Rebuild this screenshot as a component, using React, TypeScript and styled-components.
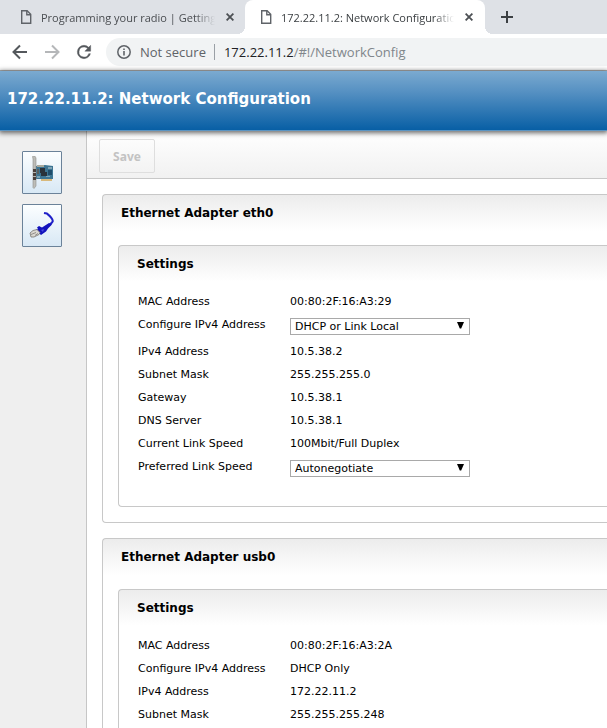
import React from "react";
import styled, { createGlobalStyle } from "styled-components";

const Global = createGlobalStyle`
  * { box-sizing: border-box; }
  html, body { margin: 0; height: 100%; background: #fff; }
  #root { height: 100%; }
  button, select { font: inherit; color: inherit; }
`;

const Window = styled.div`
  min-height: 100vh;
  display: flex;
  flex-direction: column;
  font-family: "DejaVu Sans", Verdana, sans-serif;
  font-size: 11px;
  color: #000;
`;

const TabStrip = styled.div`
  display: flex;
  flex: none;
  height: 34px;
  background: #dee1e6;
  font-family: "Open Sans", "Segoe UI", sans-serif;
  font-size: 11px;
`;

const Tab = styled.div<{ $active?: boolean }>`
  position: relative;
  flex: 0 1 ${(p) => (p.$active ? "240px" : "245px")};
  min-width: 0;
  display: flex;
  align-items: center;
  gap: 9px;
  padding: ${(p) => (p.$active ? "0 10px 0 15px" : "0 9px 0 20px")};
  color: ${(p) => (p.$active ? "#3c4043" : "#4a4d51")};
  background: ${(p) => (p.$active ? "#fff" : "transparent")};
  border-radius: 8px 8px 0 0;
  &::before, &::after {
    content: "";
    display: ${(p) => (p.$active ? "block" : "none")};
    position: absolute;
    bottom: 0;
    width: 8px;
    height: 8px;
  }
  &::before { left: -8px; background: radial-gradient(circle at 0 0, transparent 8px, #fff 8px); }
  &::after { right: -8px; background: radial-gradient(circle at 100% 0, transparent 8px, #fff 8px); }
`;

const TabTitle = styled.span`
  flex: 1;
  min-width: 0;
  overflow: hidden;
  white-space: nowrap;
  mask-image: linear-gradient(to right, #000 calc(100% - 20px), transparent);
`;

const IconButton = styled.button<{ $size?: number }>`
  flex: none;
  display: flex;
  align-items: center;
  justify-content: center;
  width: ${(p) => p.$size ?? 16}px;
  height: ${(p) => p.$size ?? 16}px;
  padding: 0;
  border: 0;
  background: transparent;
`;

const NewTab = styled(IconButton)`
  margin: 3px 0 0 8px;
`;

const AddressRow = styled.div`
  flex: none;
  display: flex;
  align-items: center;
  height: 37px;
  padding-left: 4px;
  background: #fff;
  border-bottom: 1px solid #b6b6b6;
`;

const Omnibox = styled.div`
  flex: 1;
  display: flex;
  align-items: center;
  height: 28px;
  margin-left: 6px;
  padding-left: 11px;
  background: #f1f3f4;
  border-radius: 14px 0 0 14px;
  font-family: "Open Sans", "Segoe UI", sans-serif;
  font-size: 13px;
  white-space: nowrap;
  color: #5f6368;
`;

const Security = styled.span`
  margin-left: 9px;
  padding-right: 8px;
  border-right: 1px solid #9aa0a6;
  line-height: 16px;
`;

const Url = styled.span`
  margin-left: 9px;
  color: #80868b;
  b { font-weight: 400; color: #202124; }
`;

const Banner = styled.header`
  position: relative;
  z-index: 1;
  flex: none;
  display: flex;
  align-items: center;
  height: 60px;
  padding: 0 7px 4px;
  background: linear-gradient(#7baad0, #5590c2 36%, #085fa5);
  border-bottom: 1px solid #5a94c2;
  box-shadow: 0 1px 5px 1px rgba(0, 0, 0, 0.6);
`;

const BannerTitle = styled.h1`
  margin: 0;
  font-size: 15px;
  line-height: 20px;
  color: #fff;
  white-space: nowrap;
`;

const Body = styled.div`
  flex: 1;
  display: flex;
`;

const Sidebar = styled.nav`
  flex: none;
  width: 87px;
  padding: 20px 22px;
  display: flex;
  flex-direction: column;
  gap: 10px;
  background: #efefef;
  border-right: 1px solid #c6c6c6;
`;

const SideButton = styled.button`
  display: flex;
  align-items: center;
  justify-content: center;
  width: 40px;
  height: 43px;
  padding: 0;
  border: 1px solid #6b8299;
  border-radius: 1px;
  background: linear-gradient(#fcfeff, #d8e8f5);
`;

const Main = styled.main`
  flex: 1;
  min-width: 0;
`;

const Toolbar = styled.div`
  height: 48px;
  padding: 8px 12px;
  background: linear-gradient(#fff, #f1f1f1);
  border-bottom: 1px solid #c8c8c8;
`;

const SaveButton = styled.button`
  width: 56px;
  height: 34px;
  padding: 0;
  border: 1px solid #dedede;
  border-radius: 2px;
  background: transparent;
  font-family: "Noto Sans", Tahoma, sans-serif;
  font-size: 12px;
  font-weight: 700;
  color: #c3c3c3;
`;

const Content = styled.div`
  display: flex;
  flex-direction: column;
  gap: 15px;
  padding: 15px 0 15px 15px;
`;

const Panel = styled.section`
  padding: 0 0 15px 15px;
  border: 1px solid #c8c8c8;
  border-right: 0;
  border-radius: 4px 0 0 4px;
  background: linear-gradient(#ececec, #fff 36px);
`;

const SettingsPanel = styled(Panel)`
  padding: 0 0 24px 15px;
`;

const PanelTitle = styled.h2`
  margin: 0;
  padding: 10px 3px 24px;
  font-size: 12px;
  line-height: 16px;
`;

const SettingsTitle = styled(PanelTitle)`
  padding-bottom: 18px;
`;

const Settings = styled.dl`
  margin: 0;
  padding-left: 4px;
`;

const Row = styled.div`
  display: grid;
  grid-template-columns: 152px 1fr;
  padding: 5px 0;
  line-height: 13px;
  dd { margin: 0; }
`;

const SelectBox = styled.select`
  display: block;
  width: 100%;
  height: 17px;
  padding: 0 4px;
  border: 1px solid #a9a9a9;
  border-radius: 0;
  appearance: none;
  background: #fff;
`;

const SelectWrap = styled.div`
  position: relative;
  width: 180px;
  svg { position: absolute; right: 6px; top: 4px; pointer-events: none; }
`;

const DocIcon = () => (
  <svg width="12" height="16" viewBox="0 0 12 16" fill="none" stroke="#5f6368" strokeWidth="1.4">
    <path d="M1.7 1.7h5.4l3.6 3.6v9H1.7z" />
    <path d="M6.8 1.7v4h4" />
  </svg>
);

const CloseIcon = () => (
  <svg width="8" height="8" viewBox="0 0 8 8" stroke="#4c5054" strokeWidth="1.8">
    <path d="M.6.6l6.8 6.8M7.4.6L.6 7.4" />
  </svg>
);

const ArrowIcon = ({ forward = false }: { forward?: boolean }) => (
  <svg width="24" height="24" viewBox="0 0 24 24" fill="none" stroke={forward ? "#b5b7b9" : "#54585c"} strokeWidth="2">
    <path d={forward ? "M5 12h13M12 5.5l6.5 6.5-6.5 6.5" : "M19 12H6M12 5.5L5.5 12l6.5 6.5"} />
  </svg>
);

const ReloadIcon = () => (
  <svg width="20" height="20" viewBox="0 0 24 24" fill="#54585c" stroke="#54585c" strokeWidth=".5">
    <path d="M17.65 6.35A7.96 7.96 0 0 0 12 4a8 8 0 1 0 7.73 10h-2.08A6 6 0 1 1 12 6c1.66 0 3.14.69 4.22 1.78L13 11h7V4z" />
  </svg>
);

const InfoIcon = () => (
  <svg width="14" height="14" viewBox="0 0 14 14">
    <circle cx="7" cy="7" r="6.2" fill="none" stroke="#5f6368" strokeWidth="1.5" />
    <path d="M6.2 6h1.6v4.4H6.2zM6.2 3.4h1.6V5H6.2z" fill="#5f6368" />
  </svg>
);

const CardIcon = () => (
  <svg width="24" height="34" viewBox="0 0 24 34">
    <path d="M6 10l9-1 8 1v13H6z" fill="#3d7593" />
    <path d="M11 23h11v2H11z" fill="#d8b97c" />
    <path d="M7 9h7v2H7z" fill="#a9a99c" />
    <path d="M18 11h4v2h-4zM7 20h3v2H7zM16 20h4v1h-4z" fill="#7fa4b5" />
    <path d="M10 12h5v4h2v4h-6v-3h-1z" fill="#29323a" />
    <path d="M18 14h4v5h-4z" fill="#1f4d6b" />
    <path d="M7 13h2v5H7z" fill="#5a5f60" />
    <path d="M2.500.5L5 .2 6 2v28l-2 2.500-1-1V3z" fill="#bdbdb8" stroke="#8f8f8b" strokeWidth=".6" />
    <path d="M3 13h3v3H3zM3 17h3v3H3zM3 21h3v3H3z" fill="#4b403c" />
  </svg>
);

const CableIcon = () => (
  <svg width="26" height="28" viewBox="0 0 26 28">
    <path d="M15 1l3 .6C21 4 23.500 6.500 23.800 9c-.3 2-3 3.500-6.300 6" fill="none" stroke="#2020c8" strokeWidth="2" strokeLinejoin="round" />
    <path d="M20 11l-7 4.500-3-1.500-2 1.500 1 1.500-2 1 5 5 5-3.500 2-3 4-4z" fill="#1212bd" />
    <path d="M12 18l3-1-1 3z" fill="#4a4ae0" />
    <path d="M1 21l3-2.500 4-1 3 3-1 2-5 2.500H2z" fill="#dad7d0" stroke="#77746f" strokeWidth=".8" />
    <path d="M2 22.500l5-2M6 23.500l3-2" stroke="#8a8680" strokeWidth=".9" />
  </svg>
);

type Setting = { label: string; value: string; options?: string[] };

const ETH0: Setting[] = [
  { label: "MAC Address", value: "00:80:2F:16:A3:29" },
  { label: "Configure IPv4 Address", value: "DHCP or Link Local", options: ["DHCP or Link Local", "Static", "DHCP Only"] },
  { label: "IPv4 Address", value: "10.5.38.2" },
  { label: "Subnet Mask", value: "255.255.255.0" },
  { label: "Gateway", value: "10.5.38.1" },
  { label: "DNS Server", value: "10.5.38.1" },
  { label: "Current Link Speed", value: "100Mbit/Full Duplex" },
  { label: "Preferred Link Speed", value: "Autonegotiate", options: ["Autonegotiate"] },
];

const USB0: Setting[] = [
  { label: "MAC Address", value: "00:80:2F:16:A3:2A" },
  { label: "Configure IPv4 Address", value: "DHCP Only" },
  { label: "IPv4 Address", value: "172.22.11.2" },
  { label: "Subnet Mask", value: "255.255.255.248" },
];

const Adapter = ({ name, settings }: { name: string; settings: Setting[] }) => (
  <Panel>
    <PanelTitle>Ethernet Adapter {name}</PanelTitle>
    <SettingsPanel>
      <SettingsTitle as="h3">Settings</SettingsTitle>
      <Settings>
        {settings.map(({ label, value, options }) => {
          const id = `${name}-${label.replace(/\s/g, "-")}`;
          return (
            <Row key={label}>
              <dt>{options ? <label htmlFor={id}>{label}</label> : label}</dt>
              <dd>
                {options ? (
                  <SelectWrap>
                    <SelectBox id={id} defaultValue={value}>
                      {options.map((o) => <option key={o}>{o}</option>)}
                    </SelectBox>
                    <svg width="7" height="7" viewBox="0 0 7 7"><path d="M0 0h7L4.200 6.500H2.800z" /></svg>
                  </SelectWrap>
                ) : value}
              </dd>
            </Row>
          );
        })}
      </Settings>
    </SettingsPanel>
  </Panel>
);

export default function App() {
  return (
    <>
      <Global />
      <Window>
        <TabStrip>
          <Tab>
            <DocIcon />
            <TabTitle>Programming your radio | Getting</TabTitle>
            <IconButton $size={12} aria-label="Close tab"><CloseIcon /></IconButton>
          </Tab>
          <Tab $active>
            <DocIcon />
            <TabTitle>172.22.11.2: Network Configuration</TabTitle>
            <IconButton $size={12} aria-label="Close tab"><CloseIcon /></IconButton>
          </Tab>
          <NewTab $size={28} aria-label="New tab">
            <svg width="12" height="12" viewBox="0 0 12 12" stroke="#3c4043" strokeWidth="2"><path d="M6 0v12M0 6h12" /></svg>
          </NewTab>
        </TabStrip>
        <AddressRow>
          <IconButton $size={32} aria-label="Back"><ArrowIcon /></IconButton>
          <IconButton $size={32} aria-label="Forward"><ArrowIcon forward /></IconButton>
          <IconButton $size={32} aria-label="Reload"><ReloadIcon /></IconButton>
          <Omnibox>
            <InfoIcon />
            <Security>Not secure</Security>
            <Url><b>172.22.11.2</b>/#!/NetworkConfig</Url>
          </Omnibox>
        </AddressRow>
        <Banner>
          <BannerTitle>172.22.11.2: Network Configuration</BannerTitle>
        </Banner>
        <Body>
          <Sidebar>
            <SideButton aria-label="System Configuration"><CardIcon /></SideButton>
            <SideButton aria-label="Network Configuration"><CableIcon /></SideButton>
          </Sidebar>
          <Main>
            <Toolbar><SaveButton disabled>Save</SaveButton></Toolbar>
            <Content>
              <Adapter name="eth0" settings={ETH0} />
              <Adapter name="usb0" settings={USB0} />
            </Content>
          </Main>
        </Body>
      </Window>
    </>
  );
}
